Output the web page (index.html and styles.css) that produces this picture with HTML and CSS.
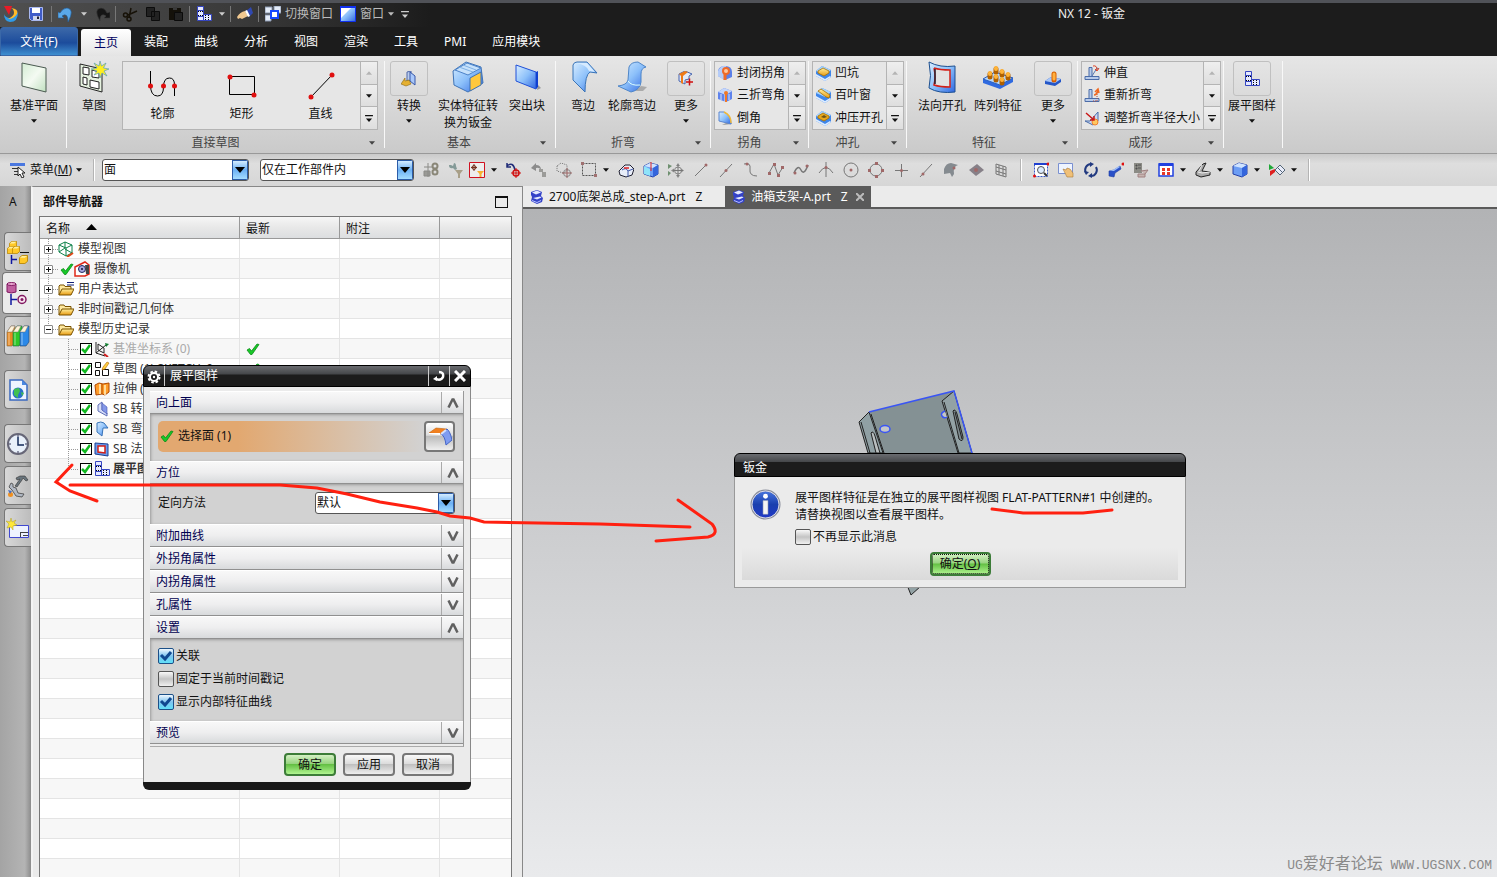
FILE: index.html
```html
<!DOCTYPE html>
<html lang="zh-CN">
<head>
    <meta charset="UTF-8">
    <meta name="viewport" content="width=device-width, initial-scale=1.0">
    <title>NX 12 - 钣金</title>
    <link rel="stylesheet" href="styles.css">
</head>
<body>

    <!-- Shared icons -->
    <svg class="sprite" aria-hidden="true">
        <defs>
            <linearGradient id="blue" x1="0" y1="0" x2="1" y2="1"><stop offset="0" stop-color="#d8edff"/><stop offset=".5" stop-color="#8cc0fa"/><stop offset="1" stop-color="#2f66e0"/></linearGradient>
            <linearGradient id="green" x1="0" y1="0" x2="1" y2="1"><stop offset="0" stop-color="#d3ecd3"/><stop offset=".5" stop-color="#f4faf2"/><stop offset="1" stop-color="#c0e0c0"/></linearGradient>
            <linearGradient id="gold" x1="0" y1="0" x2="0" y2="1"><stop offset="0" stop-color="#fff0a0"/><stop offset="1" stop-color="#e89a10"/></linearGradient>
            <linearGradient id="info" x1="0" y1="0" x2="0" y2="1"><stop offset="0" stop-color="#4a78e0"/><stop offset=".5" stop-color="#1a3fae"/><stop offset="1" stop-color="#2038c8"/></linearGradient>
        </defs>
        <symbol id="caret" viewBox="0 0 7 4"><path d="M0 0h7L3.500 4z" fill="currentColor"/></symbol>
        <symbol id="caret-bar" viewBox="0 0 9 8"><path d="M0 0h9v1.500H0zM1 4h7L4.500 8z" fill="currentColor"/></symbol>
        <symbol id="up" viewBox="0 0 12 10"><path d="m1.500 9.500 4-8h1l4 8" fill="none" stroke="#606060" stroke-width="2.500"/></symbol>
        <symbol id="down" viewBox="0 0 12 10"><path d="m1.500.5 4 8h1l4-8" fill="none" stroke="#606060" stroke-width="2.500"/></symbol>
        <symbol id="tick" viewBox="0 0 14 12"><path d="M1 7 3.500 5.500 5.500 8 11 1l2 .5L6 11.500H4.500z" fill="#18c828" stroke="#0b8a18" stroke-width=".8"/></symbol>
        <symbol id="folder" viewBox="0 0 16 16"><path d="M1 14V5l1-1h4l1 1.500h6V8" fill="#ffe9a0" stroke="#7a5200"/><path d="M1 14 4 8h12l-3 6z" fill="url(#gold)" stroke="#7a5200"/></symbol>
        <symbol id="flat" viewBox="0 0 16 16"><path d="M1.500.5h6v4h-6zM1.500 10.500h6v4h-6zM1.500 4.500h6v6h-6zM7.500 8.500h8v6h-8z" fill="#e4e8ff" stroke="#3545c0"/><path d="M2 5.500h5M2 9.500h5M9.500 9v5M12.500 9v5" stroke="#000" stroke-dasharray="1 1"/></symbol>
        <symbol id="part" viewBox="0 0 16 16"><path d="M2 3 8 1l5 2-1 4 2 2-1 4-5 2-6-3 1-4-1-2z" fill="#3442c8"/><path d="m3 3.500 5-2 4 2-5 2zM4 9l4 1.500 4.500-2L11 7.500z" fill="#e5eaff"/><path d="m3 11.500 5 2 4-2" stroke="#b5c0ff" fill="none"/></symbol>
        <symbol id="die" viewBox="0 0 16 16"><path d="m1 6 6-5 9 4v7l-6 4-9-5z" fill="#3f86ea"/><path d="m1 6 6-5 9 4-6 5z" fill="#a8d4fa"/><path d="m1 11 9 5 6-4-1-1-5 3-9-5z" fill="#dcecff"/></symbol>
        <symbol id="bendbase" viewBox="0 0 16 16"><path d="M1 11.500h14v3H1zM5 2.500h3v9H5z" fill="#b8cbea" stroke="#4b6ca8"/></symbol>
        <symbol id="cube" viewBox="0 0 16 16"><path d="m1 4 6-3 8 2v9l-5 3-9-3z" fill="#6c9df4" stroke="#2440a8"/><path d="m1 4 6-3 8 2-5 3z" fill="#cfe3ff"/><path d="m10 6 5-3v9l-5 3z" fill="#3465dc"/></symbol>
        <symbol id="block" viewBox="0 0 10 10"><path d="m.5 3 3-2.500h6V7l-3 2.500h-6z" fill="#ffc828" stroke="#b88400"/><path d="m1 3 2.500-2H9L6.500 3z" fill="#fff0a0"/></symbol>
    </svg>

    <header class="titlebar">
        <svg class="icon" viewBox="0 0 16 16"><path d="M1 8q0 7 6 8 8 0 8-10-4 6-9 6-4-1-5-4" fill="#2f9be8"/><path d="M8 2q8 1 6 6-3 5-9 5 6-3 6-6 0-4-3-5" fill="#ffba28"/><path d="M1 0h8L6 9z" fill="#e81c28"/></svg>
        <svg class="icon save" viewBox="0 0 16 16"><path d="M1.500 1.500h13v13h-11l-2-2z" fill="#405cc8" stroke="#a9b8f0"/><path d="M4 2h8v5H4z" fill="#fff"/><path d="M5 10h7v4H5z" fill="#cfd5ea"/><path d="M9 10.500h2V13H9z" fill="#223"/></svg>
        <i class="bar"></i>
        <svg class="icon" viewBox="0 0 16 16"><path d="M0 6v6h6l-2-2q6-4 6 6 7-13-1-14-4 0-7 5z" fill="#5aa8e8" stroke="#205c9a" stroke-width=".6"/></svg>
        <svg class="caret light"><use href="#caret"/></svg>
        <svg class="icon" viewBox="0 0 16 16"><path d="M16 6v6h-6l2-2Q6 6 6 15-1 3 7 2q4 0 6 5z" fill="#151515" stroke="#3a3a3a" stroke-width=".6"/></svg>
        <i class="bar"></i>
        <svg class="icon" viewBox="0 0 16 16"><path d="m15 5-9 4m3-7-2 10" stroke="#171208" stroke-width="1.500"/><circle cx="3.500" cy="9" r="2" fill="none" stroke="#171208" stroke-width="1.500"/><circle cx="7" cy="13" r="2" fill="none" stroke="#171208" stroke-width="1.500"/></svg>
        <svg class="icon" viewBox="0 0 16 16"><path d="M1.500 1.500h8v9h-8zM6.500 5.500h8v9h-8z" fill="#222" stroke="#0c0c0c"/></svg>
        <svg class="icon" viewBox="0 0 16 16"><path d="M1 2h12v12H1z" fill="#14110a"/><path d="M5 1h4v3H5z" fill="#3a3a3a"/><path d="M6.500 6.500h8v8h-8z" fill="#222" stroke="#0a0a0a"/></svg>
        <i class="bar"></i>
        <svg class="icon"><use href="#flat"/></svg>
        <svg class="caret light"><use href="#caret"/></svg>
        <i class="bar"></i>
        <svg class="icon" viewBox="0 0 16 16"><path d="M0 11q3-5 8-6l3 5-6 3-2-1-2 1z" fill="#f0c890"/><path d="m9 5 5-4 2 6-4 4z" fill="#3048b0"/><path d="m8 5 2-1 3 6-2 1z" fill="#fff"/></svg>
        <i class="bar"></i>
        <button class="title-button"><svg class="icon" viewBox="0 0 16 16"><path d="M0 1h7v6H0zM9 0h7v7H9zM0 9h6v6H0z" fill="#e4ecf8" stroke="#8a98b0"/><path d="M6 5h7v7H6z" fill="#fff" stroke="#1747ff" stroke-width="2"/></svg>切换窗口</button>
        <button class="title-button"><svg class="icon" viewBox="0 0 16 16"><path d="M.5.5h15v15H.5z" fill="url(#blue)" stroke="#1030f0"/><path d="M0 0h16v2H0z" fill="#1030f0"/><path d="M1 2h10L1 12z" fill="#fff"/></svg>窗口<svg class="caret"><use href="#caret"/></svg></button>
        <svg class="caret-bar light"><use href="#caret-bar"/></svg>
        <h1 class="app-title">NX 12 - 钣金</h1>
    </header>

    <nav class="tabs">
        <button class="tab file">文件(F)</button>
        <button class="tab active">主页</button>
        <button class="tab">装配</button>
        <button class="tab">曲线</button>
        <button class="tab">分析</button>
        <button class="tab">视图</button>
        <button class="tab">渲染</button>
        <button class="tab">工具</button>
        <button class="tab">PMI</button>
        <button class="tab">应用模块</button>
    </nav>

    <!-- Ribbon -->
    <div class="ribbon">
        <div class="group g-datum">
            <div class="group-body">
                <button class="tool"><svg viewBox="0 0 32 32"><path d="M4 2l24 5v24L4 25z" fill="url(#green)" stroke="#4a5a50"/></svg>基准平面<svg class="caret"><use href="#caret"/></svg></button>
            </div>
        </div>
        <div class="group g-sketch">
            <div class="group-body">
                <button class="tool"><svg viewBox="0 0 32 32"><path d="M2 3l22 5v23L2 25z" fill="#e6f2e0" stroke="#222"/><path d="m5 6 6 1v7l-6-1zM14 9l7 2v6l-7-1zM5 16l4 1v7l-4-1zM12 19l9 2v7l-9-2z" fill="#fff" stroke="#222"/><path d="m22 0 1.500 5 4.500-3-2.500 5L31 8l-5 2 3 5-5-3-2 5-1-5-5 2 3-4-6-2 6-1-3-5 5 3z" fill="#ffee20" stroke="#5a9fb8" stroke-width=".7"/></svg>草图</button>
                <div class="gallery">
                    <button class="shape"><svg viewBox="0 0 32 32"><path d="M3.500 1v14q0 11 7 11 6 0 6-9 0-9 6-9 5 0 5 7v11" fill="none" stroke="#000"/><circle cx="3.500" cy="16" r="2.500" fill="#e01010"/><circle cx="16.500" cy="16" r="2.500" fill="#e01010"/><circle cx="27.500" cy="16" r="2.500" fill="#e01010"/></svg>轮廓</button>
                    <button class="shape"><svg viewBox="0 0 32 32"><path d="M3.500 6.500h25v18h-25z" fill="none" stroke="#000"/><circle cx="4" cy="7" r="2.500" fill="#e01010"/><circle cx="28" cy="25" r="2.500" fill="#e01010"/></svg>矩形</button>
                    <button class="shape"><svg viewBox="0 0 32 32"><path d="M6 27 27 5" stroke="#000"/><circle cx="6" cy="27" r="2.500" fill="#e01010"/><circle cx="27" cy="5" r="2.500" fill="#e01010"/></svg>直线</button>
                    <div class="scroller">
                        <button aria-label="上一行" disabled><svg class="caret flip"><use href="#caret"/></svg></button>
                        <button aria-label="下一行"><svg class="caret"><use href="#caret"/></svg></button>
                        <button aria-label="展开"><svg class="caret-bar"><use href="#caret-bar"/></svg></button>
                    </div>
                </div>
            </div>
            <div class="group-foot"><span>直接草图</span><svg class="caret"><use href="#caret"/></svg></div>
        </div>
        <div class="group g-basic">
            <div class="group-body">
                <button class="tool"><span class="frame"><svg viewBox="0 0 16 16"><path d="m6 1 4-1v9l-4 1z" fill="#b9ccec" stroke="#5068a8"/><path d="m9 1 5 4v9l-5-4z" fill="#a9c8fa" stroke="#3757a8"/><path d="m0 13 4-6v3l4-1 2 4-5 2z" fill="#e5b030" stroke="#8a6810" stroke-width=".6"/></svg></span>转换<svg class="caret"><use href="#caret"/></svg></button>
                <button class="tool wide"><svg viewBox="0 0 32 32"><path d="M1 10 14 1l15 5 2 16-15 9-14-7z" fill="url(#blue)" stroke="#3f73b5"/><path d="m3 9 12-7 14 5-13 7z" fill="#c6e1fb" stroke="#4c82c8"/><path d="M7 6l14 5M11 4l13 5" stroke="#7fb0e4"/><path d="M18 17 29 11v13l-11 6z" fill="#ffc83c" stroke="#3f73b5"/></svg>实体特征转<br>换为钣金</button>
                <button class="tool"><svg viewBox="0 0 32 32"><path d="m26 29 4-2-3-3z" fill="#999"/><path d="M5 4 25 11v17L5 20z" fill="url(#blue)" stroke="#1f4fd8"/><path d="m25 11 2-1v16l-2 2z" fill="#1040d0"/></svg>突出块</button>
            </div>
            <div class="group-foot"><span>基本</span><svg class="caret"><use href="#caret"/></svg></div>
        </div>
        <div class="group g-bend">
            <div class="group-body">
                <button class="tool"><svg viewBox="0 0 32 32"><path d="M6 4q1-3 4-3h10l10 11-7-1q-5 3-5 20L6 19z" fill="url(#blue)" stroke="#3974b8"/><path d="M9 2h11l8 9-6-1Q20 4 9 2" fill="#d6ebff"/></svg>弯边</button>
                <button class="tool mid"><svg viewBox="0 0 32 32"><path d="M19 30h8l4-4-6-1z" fill="#aaa"/><path d="M13 6q2-5 9-5l8 5q-5 1-5 7v8q-1 8-10 10L2 25q9-1 10-6z" fill="url(#blue)" stroke="#4f86c8"/><path d="M12 20q3 5 12 4" fill="none" stroke="#dff"/></svg>轮廓弯边</button>
                <button class="tool more"><span class="frame"><svg viewBox="0 0 16 16"><path d="m1 3 6-3 7 3-3 2v3l-4 1v4l-6-3z" fill="#e2ebfa" stroke="#4865b0"/><path d="m1 3 6-3 3 1-5 4v8l-2-1V5z" fill="#ee7a18"/><path d="M8 11h7M11.500 7.500v7" stroke="#d01010" stroke-width="1.500"/></svg></span>更多<svg class="caret"><use href="#caret"/></svg></button>
            </div>
            <div class="group-foot"><span>折弯</span><svg class="caret"><use href="#caret"/></svg></div>
        </div>
        <div class="group g-corner">
            <div class="group-body">
                <div class="gallery list">
                    <div class="rows">
                        <button><svg class="icon" viewBox="0 0 16 16"><path d="M1 6q1-5 7-5 7 0 7 6v5l-7 3-7-4z" fill="#5a7fe8"/><path d="M1 6q3-6 8-5l-2 14-6-4z" fill="#b5ccf8"/><path d="M8 8v7" stroke="#ef6a28" stroke-width="3"/><circle cx="9" cy="6" r="3" fill="#ffc9a0" stroke="#ef6a28" stroke-width="2"/></svg>封闭拐角</button>
                        <button><svg class="icon" viewBox="0 0 16 16"><path d="m1 5 6-4 8 3v8l-6 3-8-3z" fill="#5f83ec"/><path d="m1 5 6-4 8 3-6 4z" fill="#c4d6fa"/><path d="M8 7v8M4 7v6M12 7v6" stroke="#dce6ff"/><circle cx="9" cy="6" r="2" fill="#f07828"/><path d="M9 7v8" stroke="#f07828" stroke-width="2"/></svg>三折弯角</button>
                        <button><svg class="icon" viewBox="0 0 16 16"><path d="m5 15 10-1-2-3z" fill="#999"/><path d="m2 2 5 0q7 3 7 12L2 11z" fill="url(#blue)" stroke="#5a85d0"/><path d="M7 2q7 3 7 11" fill="none" stroke="#f0b838" stroke-width="1.500"/></svg>倒角</button>
                    </div>
                    <div class="scroller">
                        <button aria-label="上一行" disabled><svg class="caret flip"><use href="#caret"/></svg></button>
                        <button aria-label="下一行"><svg class="caret"><use href="#caret"/></svg></button>
                        <button aria-label="展开"><svg class="caret-bar"><use href="#caret-bar"/></svg></button>
                    </div>
                </div>
            </div>
            <div class="group-foot"><span>拐角</span><svg class="caret"><use href="#caret"/></svg></div>
        </div>
        <div class="group g-punch">
            <div class="group-body">
                <div class="gallery list">
                    <div class="rows">
                        <button><svg class="icon" viewBox="0 0 16 16"><use href="#die"/><path d="m3 6 5-3 6 3v2l-5 3-6-3z" fill="url(#gold)" stroke="#a87000" stroke-width=".8"/></svg>凹坑</button>
                        <button><svg class="icon" viewBox="0 0 16 16"><use href="#die"/><path d="m3 4 3-2 9 6-1 3-3-1z" fill="url(#gold)" stroke="#a87000" stroke-width=".8"/></svg>百叶窗</button>
                        <button><svg class="icon" viewBox="0 0 16 16"><use href="#die"/><path d="m3 6 5-3 6 3v2l-5 3-6-3z" fill="#e8a81c" stroke="#a87000" stroke-width=".8"/><path d="m6 7 3-2 3 2-3 1z" fill="#6c5418"/></svg>冲压开孔</button>
                    </div>
                    <div class="scroller">
                        <button aria-label="上一行" disabled><svg class="caret flip"><use href="#caret"/></svg></button>
                        <button aria-label="下一行"><svg class="caret"><use href="#caret"/></svg></button>
                        <button aria-label="展开"><svg class="caret-bar"><use href="#caret-bar"/></svg></button>
                    </div>
                </div>
            </div>
            <div class="group-foot"><span>冲孔</span><svg class="caret"><use href="#caret"/></svg></div>
        </div>
        <div class="group g-feature">
            <div class="group-body">
                <button class="tool"><svg viewBox="0 0 32 32"><path d="M3 1q11 6 26 4v26q-16 2-26-4 3-12 0-26" fill="url(#blue)" stroke="#1c4f90"/><path d="M8 7q6 2 16 2v17q-10 0-16-2 2-8 0-17" fill="#e2e2e2" stroke="#d22018" stroke-width="1.500"/><path d="M9 8v15" stroke="#223" stroke-width="1.500"/></svg>法向开孔</button>
                <button class="tool"><svg viewBox="0 0 32 32"><path d="m1 18 12-7 18 6v4l-13 7L1 22z" fill="#2f6ae0"/><path d="m1 18 12-7 18 6-13 7z" fill="#b9d8fa" stroke="#2a60c0"/><path d="M8 13v3M14 8v3M14 16v3M20 11v3M20 19v3M26 14v3" stroke="#b06000" stroke-width="5" stroke-linecap="round"/><path d="M8 12v1M14 7v1M14 15v1M20 10v1M20 18v1M26 13v1" stroke="#ffb338" stroke-width="4" stroke-linecap="round"/></svg>阵列特征</button>
                <button class="tool more"><span class="frame"><svg viewBox="0 0 16 16"><path d="m0 10 6-4 10 2v3l-6 4-10-2z" fill="#2456c8"/><path d="m0 10 6-4 10 2-6 4z" fill="#a9c8f8"/><path d="M9 3v6" stroke="#d86000" stroke-width="5" stroke-linecap="round"/><path d="M9 3v5" stroke="#ffb040" stroke-width="3" stroke-linecap="round"/></svg></span>更多<svg class="caret"><use href="#caret"/></svg></button>
            </div>
            <div class="group-foot"><span>特征</span><svg class="caret"><use href="#caret"/></svg></div>
        </div>
        <div class="group g-form">
            <div class="group-body">
                <div class="gallery list">
                    <div class="rows">
                        <button><svg class="icon" viewBox="0 0 16 16"><use href="#bendbase"/><path d="m8 11 5-8 2 1" fill="none" stroke="#5878b0"/><path d="M9 1q4-1 4 4m2-2-2 3-2-2" fill="none" stroke="#e04020"/></svg>伸直</button>
                        <button><svg class="icon" viewBox="0 0 16 16"><use href="#bendbase"/><path d="M9 14h4V5" fill="none" stroke="#b05040" stroke-dasharray="1 1"/><path d="m10 8q3 0 4-5m-3 2 3-3 1 4" fill="none" stroke="#f06820" stroke-width="1.500"/></svg>重新折弯</button>
                        <button><svg class="icon" viewBox="0 0 16 16"><path d="M1 11h5L14 2v9l-5 4z" fill="#c8d8f4" stroke="#4b6ca8"/><circle cx="11" cy="12" r="3" fill="#ffc860" stroke="#f08030"/><path d="m2 3 8 7m0-4v4H6" fill="none" stroke="#c81818" stroke-width="1.500"/></svg>调整折弯半径大小</button>
                    </div>
                    <div class="scroller">
                        <button aria-label="上一行" disabled><svg class="caret flip"><use href="#caret"/></svg></button>
                        <button aria-label="下一行"><svg class="caret"><use href="#caret"/></svg></button>
                        <button aria-label="展开"><svg class="caret-bar"><use href="#caret-bar"/></svg></button>
                    </div>
                </div>
            </div>
            <div class="group-foot"><span>成形</span><svg class="caret"><use href="#caret"/></svg></div>
        </div>
        <div class="group g-flat">
            <div class="group-body">
                <button class="tool"><span class="frame"><svg><use href="#flat"/></svg></span>展平图样<svg class="caret"><use href="#caret"/></svg></button>
            </div>
        </div>
    </div>

    <!-- Selection bar -->
    <div class="selection-bar">
        <button class="menu-button"><svg class="icon" viewBox="0 0 16 16"><path d="M0 1h15v3H0z" fill="#4a78e0"/><path d="M2 6.500h7M4 9.500h5M4 12.500h5" stroke="#333"/><path d="M8 5v9l2-2 2 4 2-1-2-4h3z" fill="#fff" stroke="#222"/></svg>菜单(<u>M</u>)<svg class="caret"><use href="#caret"/></svg></button>
        <i class="divider"></i>
        <span class="combo c-type"><select aria-label="类型过滤器"><option>面</option></select><span class="combo-arrow"><svg viewBox="0 0 10 6"><path d="M0 0h10L5 6z"/></svg></span></span>
        <span class="combo c-scope"><select aria-label="选择范围"><option>仅在工作部件内</option></select><span class="combo-arrow"><svg viewBox="0 0 10 6"><path d="M0 0h10L5 6z"/></svg></span></span>
        <div class="snap">
            <svg class="icon" viewBox="0 0 16 16"><path d="M5 1v14M1 5h8M1 9h6v5H1z" stroke="#8a8a86" fill="#9a9a96"/><circle cx="12" cy="4" r="2.500" fill="none" stroke="#8a8778" stroke-width="2"/><circle cx="12" cy="10" r="2.500" fill="none" stroke="#8a8778" stroke-width="2"/></svg>
            <svg class="icon near" viewBox="0 0 16 16"><path d="M1 3q0 4 4 3l2 2 2-1-1-3q0-3-2-3l-1 3-2-1z" fill="#849a98"/><path d="M7 8h8l-3 4v4h-2v-4z" fill="#a89f88"/></svg>
            <svg class="icon" viewBox="0 0 16 16"><path d="M.5.5h15v15H.5z" fill="#eee" stroke="#d01020"/><path d="M5 2v7M2 5.500h6" stroke="#732"/><circle cx="5" cy="5.500" r="2" fill="none" stroke="#732"/><path d="M8 9h7l-2.500 3v3h-2v-3z" fill="#f8b030"/></svg>
            <svg class="caret"><use href="#caret"/></svg>
            <svg class="icon" viewBox="0 0 16 16"><path d="M1 4q6-5 8 4M1 1v4h4" fill="none" stroke="#202c78" stroke-width="1.500"/><path d="M10 6v10M5 11h10" stroke="#d01010"/><circle cx="10" cy="11" r="3" fill="none" stroke="#d01010" stroke-width="1.500"/></svg>
            <svg class="icon" viewBox="0 0 16 16"><path d="M0 6 5 1v2q5 0 5 5-2-3-5-2v3z" fill="#8c8c8c"/><path d="M8 7h4v3H8zM11 10h4v5h-4z" fill="#9b9b98"/></svg>
            <svg class="icon" viewBox="0 0 16 16"><path d="m1 4 4-3 6 2v6l-4 2-6-2z" fill="none" stroke="#777" stroke-dasharray="1 1"/><circle cx="11" cy="11" r="3.500" fill="none" stroke="#888"/><path d="M11 6v10M6 11h10" stroke="#9a6464"/></svg>
            <svg class="icon" viewBox="0 0 16 16"><path d="M1.500 1.500h13v12h-13z" fill="none" stroke="#555" stroke-dasharray="2 1"/><path d="M0 0h3v3H0zM13 12h3v3h-3z" fill="#a07070"/></svg>
            <svg class="caret"><use href="#caret"/></svg>
            <svg class="icon" viewBox="0 0 16 16"><path d="m1 9 6-6 5 0 4 4-2 6-6 2-6-2z" fill="#e8edf8" stroke="#223"/><path d="M4 8q4-3 6 1v6M10 9l5-2" fill="none" stroke="#4058a8"/><path d="m6 6 5 0" stroke="#e02020" stroke-width="1.500"/></svg>
            <svg class="icon" viewBox="0 0 16 16"><use href="#cube"/><path d="M8 0v9" stroke="#e02020"/><path d="M1 4v8l6 2V7z" fill="#8ee4fa"/></svg>
            <svg class="icon" viewBox="0 0 16 16"><path d="M0 2v5l4-3zM0 9v5l3-3z" fill="#6f9070"/><path d="m10 1 2 3H8zm0 15 2-3H8zM3 8.500l3-2v4zm13 0-3-2v4z" fill="#888"/><circle cx="10" cy="8.500" r="3.500" fill="none" stroke="#888"/><path d="M10 3v11M5 8.500h10" stroke="#777"/></svg>
            <svg class="icon" viewBox="0 0 16 16"><path d="M2 14 13 3" stroke="#777"/><circle cx="13" cy="3" r="1.500" fill="#a06868"/></svg>
            <svg class="icon" viewBox="0 0 16 16"><path d="M2 15 14 2" stroke="#777"/><circle cx="8" cy="8.500" r="1.500" fill="#a06868"/></svg>
            <svg class="icon" viewBox="0 0 16 16"><path d="M1 2q7-2 6 5t7 7" fill="none" stroke="#777"/><circle cx="4" cy="2" r="1.500" fill="#a06868"/></svg>
            <svg class="icon" viewBox="0 0 16 16"><path d="m1 11 5-9 4 11 5-8" fill="none" stroke="#777"/><path d="M0 10h3v3H0zM5 1h3v3H5zM9 12h3v3H9zM13 4h3v3h-3z" fill="#a06868"/></svg>
            <svg class="icon" viewBox="0 0 16 16"><path d="M1 11q4-9 7-3t7-5" fill="none" stroke="#777" stroke-width="1.500"/><circle cx="2" cy="11" r="1.500" fill="#a06868"/><circle cx="14" cy="4" r="1.500" fill="#a06868"/></svg>
            <svg class="icon" viewBox="0 0 16 16"><path d="M1 11q7-11 14 0M8 0v15" fill="none" stroke="#777"/><circle cx="8" cy="5.500" r="1.500" fill="#a06868"/></svg>
            <svg class="icon" viewBox="0 0 16 16"><circle cx="8" cy="8" r="7" fill="none" stroke="#777"/><circle cx="8" cy="8" r="1.500" fill="#a06868"/></svg>
            <svg class="icon" viewBox="0 0 16 16"><circle cx="8" cy="8" r="6" fill="none" stroke="#777"/><path d="M7 0h3v3H7zM7 13h3v3H7zM0 7h3v3H0zM13 7h3v3h-3z" fill="#a06868"/></svg>
            <svg class="icon" viewBox="0 0 16 16"><path d="M8.500 2v13M2 8.500h13" stroke="#777"/><circle cx="8.500" cy="8.500" r="1.500" fill="#a06868"/></svg>
            <svg class="icon" viewBox="0 0 16 16"><path d="M2 15 14 2" stroke="#777"/><circle cx="5" cy="12" r="1.500" fill="#a06868"/></svg>
            <svg class="icon" viewBox="0 0 16 16"><path d="M1 7q2-6 7-6l7 2-2 1q-3 2-2 8l-2 3-2-4-6 1z" fill="#858b90"/><circle cx="11" cy="6" r="1.500" fill="#a06868"/></svg>
            <svg class="icon" viewBox="0 0 16 16"><path d="M1 8 9 2l7 6-8 6z" fill="#868088"/><circle cx="8" cy="8" r="2" fill="#a06868"/></svg>
            <svg class="icon" viewBox="0 0 16 16"><path d="m3 2 10 3v10L3 12zM6 3v10m4-9v10M3 5l10 3M3 9l10 3" fill="none" stroke="#777"/></svg>
        </div>
        <i class="divider wide"></i>
        <div class="view-tools">
            <svg class="icon" viewBox="0 0 16 16"><path d="M1.500 2.500h13v12h-13z" fill="#fff" stroke="#3556c8" stroke-dasharray="2 1"/><path d="M1 1h14v2H1z" fill="#2040d0"/><circle cx="8" cy="8" r="3.500" fill="#dcebff" stroke="#555"/><path d="m11 11 3 3" stroke="#333" stroke-width="2"/><circle cx="15" cy="2" r="1.500" fill="#e01010"/><circle cx="1.500" cy="14" r="1.500" fill="#e01010"/></svg>
            <svg class="icon" viewBox="0 0 16 16"><path d="M.5 1.500h14v10H.5z" fill="#eef4ff" stroke="#7a90d0"/><path d="m5 7 3 1 1-2 3 1 3 4v4H9z" fill="#f0c078" stroke="#a87838" stroke-width=".6"/></svg>
            <svg class="icon" viewBox="0 0 16 16"><path d="M3 11A6 6 0 0 1 8 2M13 5a6 6 0 0 1-5 9" fill="none" stroke="#223a80" stroke-width="2"/><path d="m7 0 4 2-4 3zM9 11l-4 3 4 2zM1 9l2 4 3-3z" fill="#223a80"/></svg>
            <svg class="icon" viewBox="0 0 16 16"><path d="m1 9 5-1 6-4 1 3-6 4-1 4-5-1z" fill="#2a50c8" stroke="#1d3ca0" stroke-width=".6"/><path d="m1 9 4-1 6-4 1 1-6 4z" fill="#9dbdf8"/><circle cx="15" cy="2" r="1.500" fill="#e01010"/></svg>
            <svg class="icon" viewBox="0 0 16 16"><path d="M1 1h8v10H1z" fill="#8b8b85"/><path d="M3 3h1v1H3zM3 6h1v1H3zM5 3h3M5 6h3" stroke="#555"/><path d="M5 12h7v3H5zM8 9l7-1-3 4" fill="#c6b4b0" stroke="#a08080"/></svg>
            <svg class="icon" viewBox="0 0 16 16"><path d="M1 2h14v12H1z" fill="#fff" stroke="#2040e0" stroke-width="1.500"/><path d="M1 1h14v3H1z" fill="#2040e0"/><path d="M4 6h3v3H4zM9 6h3v3H9zM4 10h3v3H4zM9 10h3v3H9z" fill="#e83828"/></svg>
            <svg class="caret"><use href="#caret"/></svg>
            <svg class="icon" viewBox="0 0 16 16"><path d="m1 10 7-8 3-1-4 8 8 1v3l-9 2-5-2z" fill="#aaa" stroke="#222"/><path d="m3 10 4 1 8-1M7 3 4 9" fill="none" stroke="#eee"/></svg>
            <svg class="caret"><use href="#caret"/></svg>
            <svg class="icon"><use href="#cube"/></svg>
            <svg class="caret"><use href="#caret"/></svg>
            <svg class="icon" viewBox="0 0 16 16"><path d="M0 2v6l5-2z" fill="#20a838"/><path d="m1 14 0-5 5-2v3z" fill="#e02020"/><path d="m6 8 5-5 5 5-5 5z" fill="#e8ecfa" stroke="#567"/><path d="m8 5 6 6" stroke="#567"/></svg>
            <svg class="caret"><use href="#caret"/></svg>
        </div>
        <i class="divider"></i>
    </div>

    <main class="workspace">
        <aside class="rail">
            <span class="rail-letter">A</span>
            <button aria-label="装配导航器"><svg viewBox="0 0 24 24"><use href="#block" x="3" y="1" width="8" height="8"/><use href="#block" x="1" y="6" width="8" height="8"/><use href="#block" x="6" y="6" width="8" height="8"/><use href="#block" x="13" y="15" width="9" height="9"/><path d="M14 12.500h9" stroke="#111"/><path d="M5.500 15v9M5 19.500h6" stroke="#1018a0" fill="none" stroke-width="1.500"/></svg></button>
            <button class="current" aria-label="部件导航器"><svg viewBox="0 0 24 24"><path d="M2 3v8q4 2 9 0V3z" fill="#c060a0" stroke="#801860"/><ellipse cx="6.500" cy="3" rx="4.500" ry="1.500" fill="#e8a8d0" stroke="#801860"/><path d="M14 9.500h9" stroke="#111"/><path d="M6 13v11M6 18.500h6" stroke="#1018a0" fill="none" stroke-width="1.500"/><circle cx="17" cy="18.500" r="4" fill="#f8e4f0" stroke="#801860" stroke-width="1.500"/><circle cx="17" cy="18.500" r="1.500" fill="#801860"/></svg></button>
            <button aria-label="重用库"><svg viewBox="0 0 24 24"><path d="m1 8 4-6h4v16l-3 4H1z" fill="#e88a20" stroke="#864" stroke-width=".6"/><path d="m7 8 4-6h5v16l-3 4H7z" fill="#2fc828" stroke="#264" stroke-width=".6"/><path d="m14 8 4-6h5v16l-3 4h-6z" fill="#2a88e8" stroke="#246" stroke-width=".6"/><path d="m1 8 4-6h4L6 8zm6 0 4-6h4l-3 6zm7 0 4-6h4l-3 6z" fill="#fff2d8" stroke="#777" stroke-width=".5"/><path d="M3 9v12M9 9v12M16 9v12" stroke="#fff" stroke-opacity=".5"/></svg></button>
            <button class="space" aria-label="Web 浏览器"><svg viewBox="0 0 24 24"><path d="M4 2h12l5 5v15H4z" fill="#eef4ff" stroke="#3a68c0" stroke-width="1.500"/><path d="M16 2v5h5z" fill="#4a88e0"/><circle cx="12" cy="15" r="5.500" fill="#2870c8"/><path d="m8 11 5-1 1 3-2 4 0 3-4-3zM15 14l3 1-2 3z" fill="#40c050"/></svg></button>
            <button class="space" aria-label="历史记录"><svg viewBox="0 0 24 24"><circle cx="12" cy="12" r="10" fill="#e8f0fa" stroke="#667" stroke-width="2"/><path d="M12 3v2M12 19v2M3 12h2M19 12h2" stroke="#335"/><path d="M12 5v8h6" fill="none" stroke="#102858" stroke-width="1.500"/></svg></button>
            <button aria-label="加工向导"><svg viewBox="0 0 24 24"><path d="m10 4 4-2h5l3 4-2 1-3-3-1 2-5 7-2-1 5-7-3 1z" fill="#68747c" stroke="#333" stroke-width=".6"/><path d="m5 9 2 1 0 3 3 1 2 5 6 1-2 3-6-1-4-6-3-3z" fill="#b0b8c4" stroke="#444" stroke-width=".8"/><circle cx="4.500" cy="20.500" r="2.500" fill="#f09020"/><path d="m2 16 4 1-2 3z" fill="#4a70c0"/></svg></button>
            <button aria-label="角色"><svg viewBox="0 0 24 24"><path d="M3.500 9.500h19v12h-19z" fill="#eef3ff" stroke="#4048d0"/><path d="M14 16.500h8M14.500 17v4M17 19.500h5" stroke="#444"/><path d="m5 2 1 4 4-2-2 3 3 2-4 1 0 4-2-3-4 1 2-4-3-3 4 1z" fill="#ffe838" stroke="#b0a020" stroke-width=".5"/></svg></button>
        </aside>

        <section class="navigator">
            <div class="navigator-title"><h2>部件导航器</h2><button class="restore" aria-label="还原"></button></div>
            <div class="tree">
                <table>
                    <thead>
                        <tr><th>名称<svg class="sort" viewBox="0 0 11 6"><path d="M0 6h11L5.500 0z"/></svg></th><th>最新</th><th>附注</th><th></th></tr>
                    </thead>
                    <tbody>
                        <tr><td><div class="node"><button class="expander plus" aria-label="展开"></button><i class="dots"></i><svg class="icon" viewBox="0 0 16 16"><path d="m1 4 6-3 7 3v8l-6 3-7-4zM1 4l7 3 6-3M8 7v8M7 1v6l-6 4M7 8l7 4" fill="none" stroke="#0b8048"/><path d="m9 16 6-4" stroke="#e04818" stroke-width="2"/></svg>模型视图</div></td><td></td><td></td><td></td></tr>
                        <tr><td><div class="node"><button class="expander plus" aria-label="展开"></button><i class="dots"></i><svg class="tick"><use href="#tick"/></svg><svg class="icon" viewBox="0 0 16 16"><path d="m1 6 10-5 4 3v9l-4 2H1z" fill="#fff" stroke="#e02818" stroke-width="1.500"/><circle cx="8" cy="8" r="3.500" fill="#a9a8e0" stroke="#202860"/><path d="M11 4h4v9h-3z" fill="#444"/><circle cx="8" cy="8" r="1" fill="#113"/></svg>摄像机</div></td><td></td><td></td><td></td></tr>
                        <tr><td><div class="node"><button class="expander plus" aria-label="展开"></button><i class="dots"></i><svg class="icon" viewBox="0 0 16 16"><use href="#folder"/><path d="M9 1.500h7M9 4h7" stroke="#112078"/></svg>用户表达式</div></td><td></td><td></td><td></td></tr>
                        <tr><td><div class="node"><button class="expander plus" aria-label="展开"></button><i class="dots"></i><svg class="icon"><use href="#folder"/></svg>非时间戳记几何体</div></td><td></td><td></td><td></td></tr>
                        <tr><td><div class="node last"><button class="expander" aria-label="折叠"></button><i class="dots"></i><svg class="icon"><use href="#folder"/></svg>模型历史记录</div></td><td></td><td></td><td></td></tr>
                        <tr><td><label class="node child muted"><i class="dots"></i><input type="checkbox" checked><svg class="icon" viewBox="0 0 16 16"><path d="M2 1v11l9 3M2 12 12 4M4 3v6l6 3V7z" fill="none" stroke="#222"/><path d="m11 2 4 1-3 3z" fill="#108030"/><path d="m10 13 4 3" stroke="#d02020" stroke-width="2"/></svg>基准坐标系 (0)</label></td><td><svg class="tick"><use href="#tick"/></svg></td><td></td><td></td></tr>
                        <tr><td><label class="node child"><i class="dots"></i><input type="checkbox" checked><svg class="icon" viewBox="0 0 16 16"><path d="M1.500 1.500h5v5h-5zM1.500 9.500h4v5h-4zM8.500 8.500h6v6h-6z" fill="#fff" stroke="#111"/><path d="m8 9 1-3 4-5 2 1-4 6z" fill="#ffd040" stroke="#b06000" stroke-width=".6"/></svg>草图 (1) SKETCH_0</label></td><td><svg class="tick"><use href="#tick"/></svg></td><td></td><td></td></tr>
                        <tr><td><label class="node child"><i class="dots"></i><input type="checkbox" checked><svg class="icon" viewBox="0 0 16 16"><path d="m1 4 4-2 4 1 6-1v9l-4 3-3-1-6 1z" fill="#ff9c28" stroke="#b04800"/><path d="M6 3v10M11 4v10" stroke="#fff0c0" stroke-width="1.500"/><path d="M8 3v10" stroke="#b04800"/></svg>拉伸 (2)</label></td><td></td><td></td><td></td></tr>
                        <tr><td><label class="node child"><i class="dots"></i><input type="checkbox" checked><svg class="icon" viewBox="0 0 16 16"><path d="m4 4 4-3v8l5 3v3l-9-5z" fill="#d4dcf8" stroke="#6070b8"/><path d="m8 2 5 4v7l-5-4z" fill="#8498e8" stroke="#4858b0" stroke-width=".6"/></svg>SB 转换</label></td><td></td><td></td><td></td></tr>
                        <tr><td><label class="node child"><i class="dots"></i><input type="checkbox" checked><svg class="icon" viewBox="0 0 16 16"><path d="M3 2q4-2 7 0l4 5H9l-1 8-5-4z" fill="url(#blue)" stroke="#3974b8"/></svg>SB 弯边</label></td><td></td><td></td><td></td></tr>
                        <tr><td><label class="node child"><i class="dots"></i><input type="checkbox" checked><svg class="icon" viewBox="0 0 16 16"><path d="m1 2 13 1v12L1 13z" fill="#6a9cf0" stroke="#1c3f90"/><path d="m4 5 7 0v7l-7-1z" fill="#fff" stroke="#d22018" stroke-width="1.500"/></svg>SB 法向</label></td><td></td><td></td><td></td></tr>
                        <tr><td><label class="node child last current"><i class="dots"></i><input type="checkbox" checked><svg class="icon"><use href="#flat"/></svg>展平图样</label></td><td></td><td></td><td></td></tr>
                    </tbody>
                </table>
            </div>
        </section>

        <section class="stage">
            <div class="doc-tabs">
                <button class="doc-tab"><svg class="icon"><use href="#part"/></svg>2700底架总成_step-A.prt<span>Z</span></button>
                <button class="doc-tab open"><svg class="icon"><use href="#part"/></svg>油箱支架-A.prt<span>Z</span><svg class="close" viewBox="0 0 8 8"><path d="m0 0 8 8M8 0 0 8" stroke="#bbb" stroke-width="2"/></svg></button>
            </div>
            <div class="canvas">
                <svg class="model" viewBox="850 385 130 215">
                    <path d="M869 412 954 391 972 453 883 453z" fill="#849194"/>
                    <path d="m859 422 10-10 14 41h-15z" fill="#90a0a4" stroke="#222"/>
                    <path d="m861 422 9 31M871 414l13 39" stroke="#222"/>
                    <path d="m942 401 12-10 18 62h-14z" fill="#93a2a5" stroke="#222"/>
                    <path d="m944 402 15 51" stroke="#222"/>
                    <path d="M871 433q2-3 4 3l5 17h-4z" fill="#b9bfc0" stroke="#222"/>
                    <path d="M953 411q2-3 4 3l6 23q0 6-4 2z" fill="#7e8b8e" stroke="#222"/>
                    <path d="m955 412 7 27" stroke="#222"/>
                    <path d="m869 412 85-21 18 62" fill="none" stroke="#3a55f4" stroke-width="1.500"/>
                    <ellipse cx="885" cy="429" rx="5" ry="3.500" fill="#c4c6c8" stroke="#3a55f4" stroke-width="1.500"/>
                    <path d="M945 411q-5 2-3 5t5 1" fill="#c4c6c8" stroke="#3a55f4" stroke-width="1.500"/>
                    <path d="m905 580 6 15 10-9z" fill="#93a2a5" stroke="#222"/>
                </svg>
                <p class="watermark"><span>UG</span>爱好者论坛<span> WWW.UGSNX.COM</span></p>
            </div>
        </section>
    </main>

    <!-- Flat pattern dialog -->
    <form class="dialog">
        <div class="dialog-title">
            <svg class="gear" viewBox="0 0 14 14"><circle cx="7" cy="7" r="5.500" fill="none" stroke="#fff" stroke-width="2" stroke-dasharray="2.500 1.820"/><circle cx="7" cy="7" r="4" fill="none" stroke="#fff" stroke-width="2"/><circle cx="7" cy="7" r="1.200" fill="#fff"/></svg>
            <h2>展平图样</h2>
            <button type="button" aria-label="重置"><svg viewBox="0 0 12 12"><path d="M6 2q5 0 4 5-2 4-7 2" fill="none" stroke="#fff" stroke-width="2.500"/><path d="m0 9 4-3v5z" fill="#fff"/></svg></button>
            <button type="button" aria-label="关闭"><svg viewBox="0 0 12 12"><path d="m1 1 10 10M11 1 1 11" stroke="#fff" stroke-width="3"/></svg></button>
        </div>
        <div class="dialog-body">
            <div class="sections">
                <button type="button" class="section-head">向上面<span><svg><use href="#up"/></svg></span></button>
                <div class="section-body face">
                    <div class="pick"><svg class="tick"><use href="#tick"/></svg>选择面 (1)</div>
                    <button type="button" class="face-button" aria-label="面"><svg viewBox="0 0 24 20"><path d="m1 7 7-5 11 1-6 5z" fill="#f08020" stroke="#b85800" stroke-width=".5"/><path d="M1 7h11v2L1 8z" fill="#fff"/><path d="m13 8 6-5q3 2 5 11l-6 5q-1-9-5-11" fill="#7f9cf0" stroke="#4565c8"/><path d="m13 8 5-4" stroke="#d5e2ff" stroke-width="2"/></svg></button>
                </div>
                <button type="button" class="section-head">方位<span><svg><use href="#up"/></svg></span></button>
                <div class="section-body orient">
                    <label for="orient">定向方法</label>
                    <span class="combo"><select id="orient"><option>默认</option></select><span class="combo-arrow"><svg viewBox="0 0 10 6"><path d="M0 0h10L5 6z"/></svg></span></span>
                </div>
                <button type="button" class="section-head">附加曲线<span><svg><use href="#down"/></svg></span></button>
                <button type="button" class="section-head">外拐角属性<span><svg><use href="#down"/></svg></span></button>
                <button type="button" class="section-head">内拐角属性<span><svg><use href="#down"/></svg></span></button>
                <button type="button" class="section-head">孔属性<span><svg><use href="#down"/></svg></span></button>
                <button type="button" class="section-head">设置<span><svg><use href="#up"/></svg></span></button>
                <div class="section-body settings">
                    <label class="check"><input type="checkbox" checked>关联</label>
                    <label class="check"><input type="checkbox">固定于当前时间戳记</label>
                    <label class="check"><input type="checkbox" checked>显示内部特征曲线</label>
                </div>
                <button type="button" class="section-head">预览<span><svg><use href="#down"/></svg></span></button>
            </div>
            <div class="actions">
                <button type="button" class="push primary">确定</button>
                <button type="button" class="push">应用</button>
                <button type="button" class="push">取消</button>
            </div>
        </div>
    </form>

    <!-- Message box -->
    <div class="message" role="alertdialog" aria-labelledby="message-title">
        <h2 id="message-title">钣金</h2>
        <div class="message-body">
            <div class="message-main">
                <svg class="info" viewBox="0 0 32 32"><circle cx="16" cy="16" r="14.500" fill="url(#info)" stroke="#8b8f9c" stroke-width="2"/><circle cx="16" cy="16" r="14" fill="none" stroke="#eef" stroke-width=".8"/><circle cx="16" cy="7.500" r="2.500" fill="#fff"/><path d="M13.500 12h5v14h-5z" fill="#f4f4f4" stroke="#b8b8b8" stroke-width=".5"/></svg>
                <div>
                    <p>展平图样特征是在独立的展平图样视图 FLAT-PATTERN#1 中创建的。<br>请替换视图以查看展平图样。</p>
                    <label class="check"><input type="checkbox">不再显示此消息</label>
                </div>
            </div>
            <div class="message-foot"><button class="push primary focused">确定(<u>O</u>)</button></div>
        </div>
    </div>

    <!-- Hand-drawn markup -->
    <svg class="markup" aria-hidden="true">
        <path d="M72 465 56 482 70 491 97 501"/>
        <path d="M70 485H280L317 488 347 494 380 502 417 508 437 512 450 516 470 518 484 522 600 524 690 527"/>
        <path d="M678 500 712 524Q720 534 708 537L656 541"/>
        <path d="M992 509 1023 513H1083L1112 510"/>
    </svg>

</body>
</html>
```
FILE: styles.css
```css
/* Base */
* {
    box-sizing: border-box;
}
body {
    margin: 0;
    height: 100vh;
    display: flex;
    flex-direction: column;
    overflow: hidden;
    font: 12px/16px "Noto Sans", "Noto Sans CJK SC", sans-serif;
    color: #111;
    background: #dcdcdc;
}
h1, h2, p {
    margin: 0;
    font-size: 12px;
    font-weight: 400;
}
button, select, input {
    font: inherit;
    color: inherit;
    margin: 0;
}
button {
    padding: 0;
    border: 0;
    background: none;
    white-space: nowrap;
}
svg {
    flex: none;
    display: block;
}
.sprite {
    width: 0;
    height: 0;
    position: absolute;
}
.icon {
    width: 16px;
    height: 16px;
}
.caret {
    width: 6px;
    height: 4px;
}
.caret-bar {
    width: 8px;
    height: 7px;
}
.flip {
    transform: rotate(180deg);
}
.light {
    color: #ccc;
}
.tick {
    width: 14px;
    height: 12px;
}

/* Title bar */
.titlebar {
    height: 27px;
    flex: none;
    display: flex;
    align-items: center;
    gap: 7px;
    padding: 0 4px 2px 3px;
    border-top: 3px solid #505258;
    background: linear-gradient(90deg, #505050 0, #3a3a3a 240px, #1c1c1c 430px);
}
.titlebar .save {
    margin: 0 2px;
}
.bar {
    width: 1px;
    height: 16px;
    margin: 0 -1px 0 -2px;
    background: #777;
}
.title-button {
    display: flex;
    align-items: center;
    gap: 4px;
    color: #bbb;
}
.app-title {
    margin-left: auto;
    margin-right: 368px;
    color: #eee;
}

/* Ribbon tabs */
.tabs {
    height: 29px;
    flex: none;
    display: flex;
    background: #1c1c1c;
}
.tab {
    padding: 0 13px;
    color: #fff;
}
.tab.file {
    width: 78px;
    padding: 0;
    margin-right: 3px;
    border-radius: 3px 3px 0 0;
    border: 1px solid #3a68a8;
    background: linear-gradient(#3c68a8, #1c4c9c 55%, #3f8fd0);
}
.tab.active {
    margin-top: 2px;
    color: #000060;
    border-radius: 3px 3px 0 0;
    background: linear-gradient(#fff, #e4e4e4);
}

/* Ribbon */
.ribbon {
    height: 98px;
    flex: none;
    display: flex;
    background: linear-gradient(#e6e6e6, #cacaca);
    border-bottom: 1px solid #999;
}
.group {
    display: flex;
    flex-direction: column;
    margin: 5px 0;
    border-right: 1px solid #f8f8f8;
}
.group-body {
    display: flex;
    flex: none;
    height: 72px;
}
.g-datum { width: 67px; padding-left: 6px; }
.g-sketch { width: 318px; padding-left: 3px; }
.g-basic { width: 171px; padding-left: 1px; }
.g-bend { width: 155px; padding-left: 3px; }
.g-corner { width: 98px; padding-left: 3px; }
.g-punch { width: 98px; padding-left: 3px; }
.g-feature { width: 171px; padding-left: 7px; }
.g-form { width: 146px; padding-left: 3px; }
.g-flat { width: 59px; }
.tool {
    width: 56px;
    display: flex;
    flex-direction: column;
    align-items: center;
    line-height: 17px;
}
.tool > svg:first-child {
    width: 32px;
    height: 32px;
    margin-bottom: 4px;
}
.tool .caret {
    margin-top: 5px;
}
.frame {
    width: 38px;
    height: 35px;
    margin-bottom: 1px;
    display: grid;
    place-items: center;
    border: 1px solid #c0c0c0;
    border-radius: 3px;
}
.frame svg {
    width: 16px;
    height: 16px;
}
.g-sketch .tool, .g-bend .tool { width: 48px; }
.g-bend .tool.mid { width: 50px; }
.g-basic .tool { width: 46px; }
.g-basic .tool.wide { width: 72px; }
.group-body .tool.more {
    width: 50px;
    margin-left: auto;
    margin-right: -1px;
}
.gallery {
    height: 69px;
    margin-left: 4px;
    display: flex;
    border: 1px solid #b4b4b4;
    background: #e6e6e6;
}
.shape {
    width: 79px;
    display: flex;
    flex-direction: column;
    align-items: center;
    gap: 4px;
    padding-top: 8px;
}
.shape svg {
    width: 32px;
    height: 32px;
}
.scroller {
    width: 17px;
    display: flex;
    flex-direction: column;
}
.scroller button {
    flex: 1;
    display: grid;
    place-items: center;
    border-left: 1px solid #b4b4b4;
    border-bottom: 1px solid #b4b4b4;
    background: linear-gradient(#efefef, #dedede);
}
.scroller button:last-child {
    border-bottom: 0;
}
.scroller button:disabled {
    color: #b4b4b4;
}
.gallery.list {
    flex: 1;
    margin: 0 2px 0 0;
}
.rows {
    flex: 1;
    display: flex;
    flex-direction: column;
}
.rows button {
    flex: 1;
    display: flex;
    align-items: center;
    gap: 4px;
    padding-left: 2px;
}
.group-foot {
    display: flex;
    align-items: center;
    color: #444;
    padding: 2px 9px 0 0;
}
.group-foot span {
    flex: 1;
    padding-right: 8px;
    text-align: center;
}

/* Selection bar */
.selection-bar {
    height: 32px;
    flex: none;
    display: flex;
    align-items: center;
    padding-left: 10px;
    background: linear-gradient(#cacaca, #dedede 30%, #d6d6d6);
}
.menu-button {
    display: flex;
    align-items: center;
}
.menu-button .icon {
    margin-right: 4px;
}
.menu-button .caret {
    margin-left: 4px;
}
.divider {
    width: 2px;
    height: 22px;
    margin: 0 7px 0 11px;
    border-left: 1px solid #b4b4b4;
    border-right: 1px solid #fff;
}
.divider.wide {
    margin-right: 11px;
}
.combo {
    display: flex;
    height: 22px;
    border: 1px solid #555;
    border-radius: 3px;
    overflow: hidden;
    background: #fff;
}
.combo select {
    flex: 1;
    min-width: 0;
    appearance: none;
    border: 0;
    padding: 0 1px;
    background: none;
}
.combo-arrow {
    width: 16px;
    display: grid;
    place-items: center;
    border: 1px solid #2c5ca8;
    background: linear-gradient(#d4ecff, #6cb0f4 50%, #a4dcff);
}
.combo-arrow svg {
    width: 10px;
    height: 6px;
}
.c-type {
    width: 147px;
    margin-right: 11px;
}
.c-scope {
    width: 154px;
    margin-right: 9px;
}
.snap, .view-tools {
    display: flex;
    align-items: center;
    gap: 9px;
}
.snap .caret, .view-tools .caret {
    margin-left: -3px;
}
.snap .near {
    margin-right: -4px;
}

/* Resource rail */
.workspace {
    flex: 1;
    min-height: 0;
    display: flex;
}
.rail {
    width: 31px;
    flex: none;
    display: flex;
    flex-direction: column;
    gap: 3px;
    padding-left: 4px;
    background: linear-gradient(90deg, #a4a4a4, #b4b4b4 80%, #8c8c8c);
}
.rail-letter {
    height: 43px;
    padding: 8px 5px;
}
.rail button {
    height: 39px;
    display: grid;
    place-items: center;
    border: 1px solid #777;
    border-right: 0;
    border-radius: 4px 0 0 4px;
    background: linear-gradient(90deg, #d8d8d8, #bcbcbc);
}
.rail button.current {
    height: 42px;
    margin-top: -2px;
    margin-left: -2px;
    margin-bottom: -1px;
    background: #ebebeb;
}
.rail svg {
    width: 24px;
    height: 24px;
}
.rail .space {
    margin-top: 12px;
}

/* Part navigator */
.navigator {
    width: 492px;
    flex: none;
    display: flex;
    flex-direction: column;
    padding: 0 10px 0 6px;
    border-left: 2px solid #f4f4f4;
    border-top: 1px solid #888;
    border-right: 1px solid #888;
    background: #ebebeb;
}
.navigator-title {
    height: 29px;
    display: flex;
    align-items: center;
    justify-content: space-between;
    padding: 0 4px;
}
.navigator-title h2 {
    font-weight: 700;
}
.restore {
    width: 13px;
    height: 12px;
    border: 1px solid #111;
    border-top-width: 2px;
}
.tree {
    flex: 1;
    border: 1px solid #777;
    border-bottom: 0;
    overflow: hidden;
    background:
        linear-gradient(#e4e4e4, #e4e4e4) 199px 0 / 1px 100% no-repeat,
        linear-gradient(#e4e4e4, #e4e4e4) 299px 0 / 1px 100% no-repeat,
        linear-gradient(#e4e4e4, #e4e4e4) 399px 0 / 1px 100% no-repeat,
        repeating-linear-gradient(#fff 0 19px, #e4e4e4 19px 20px, #f7f7f7 20px 39px, #e4e4e4 39px 40px) 0 22px;
}
.tree table {
    width: 100%;
    table-layout: fixed;
    border-collapse: separate;
    border-spacing: 0;
}
.tree th {
    width: 100px;
    height: 22px;
    padding: 2px 6px 0;
    text-align: left;
    font-weight: 400;
    border-right: 1px solid #999;
    border-bottom: 1px solid #999;
    background: linear-gradient(#f6f6f6, #e8e8e8 50%, #dcdee0);
}
.tree th:first-child {
    width: 200px;
}
.tree th:last-child {
    width: auto;
    border-right: 0;
}
.sort {
    display: inline-block;
    width: 11px;
    height: 6px;
    margin: 0 0 3px 16px;
}
.tree td {
    height: 20px;
    padding: 0;
    overflow: hidden;
}
.tree td > .tick {
    margin-left: 6px;
}
.node {
    height: 20px;
    display: flex;
    align-items: center;
    padding-left: 4px;
    white-space: nowrap;
    color: #333;
    background: repeating-linear-gradient(#999 0 1px, transparent 1px 2px) 8px 0 / 1px 100% no-repeat;
}
.node.last {
    background-size: 1px 50%;
}
.node .icon {
    margin-right: 4px;
}
.node .tick {
    margin: 0 0 0 2px;
}
.expander {
    width: 9px;
    height: 9px;
    border: 1px solid #888;
    border-radius: 1px;
    background: linear-gradient(#111, #111) 1px 3px / 5px 1px no-repeat, #fff;
}
.expander.plus {
    background:
        linear-gradient(#111, #111) 1px 3px / 5px 1px no-repeat,
        linear-gradient(#111, #111) 3px 1px / 1px 5px no-repeat,
        #fff;
}
.dots {
    width: 5px;
    border-top: 1px dotted #999;
}
.node.child {
    padding-left: 29px;
    background-position: 28px 0;
}
.child .dots {
    width: 9px;
    margin-right: 2px;
}
.node.child .icon {
    margin: 0 3px 0 2px;
}
.child input {
    appearance: none;
    width: 12px;
    height: 12px;
    border: 1px solid #000;
    background: #fff url("data:image/svg+xml,%3Csvg xmlns='http://www.w3.org/2000/svg' viewBox='0 0 10 10'%3E%3Cpath d='M1 5l3 3 5-7' fill='none' stroke='%2310b820' stroke-width='2.500'/%3E%3C/svg%3E");
}
.node.muted {
    color: #aaa;
}
.node.current {
    font-weight: 700;
}

/* Graphics window */
.stage {
    flex: 1;
    min-width: 0;
    display: flex;
    flex-direction: column;
}
.doc-tabs {
    height: 23px;
    flex: none;
    display: flex;
    border-bottom: 2px solid #5a5a5a;
    background: #ebebeb;
}
.doc-tab {
    display: flex;
    align-items: center;
    gap: 4px;
    padding: 0 23px 0 6px;
}
.doc-tab span {
    margin-left: 6px;
}
.doc-tab.open {
    padding: 0 7px 0 6px;
    color: #fff;
    background: #5a5a5a;
}
.close {
    width: 8px;
    height: 8px;
    margin-left: 4px;
}
.canvas {
    flex: 1;
    position: relative;
    background: linear-gradient(#b2b3b5, #e9eaec);
}
.model {
    position: absolute;
    left: 327px;
    top: 176px;
    width: 130px;
    height: 215px;
}
.watermark {
    position: absolute;
    right: 5px;
    bottom: 4px;
    font-size: 16px;
    color: #8a8a8a;
    white-space: pre;
}
.watermark span {
    font: 13px "Liberation Mono", monospace;
}

/* Dialogs */
.dialog {
    position: absolute;
    left: 143px;
    top: 365px;
    width: 328px;
    border-bottom: 8px solid #181818;
    border-radius: 6px;
    background: #ebebeb;
}
.dialog-title {
    height: 22px;
    display: flex;
    border: 1px solid #000;
    border-radius: 6px 6px 0 0;
    color: #fff;
    background: linear-gradient(#6a6c70, #45474a 40%, #1c1c1c 45%);
}
.gear {
    width: 14px;
    height: 14px;
    margin: 4px 3px;
}
.dialog-title h2 {
    flex: 1;
    padding: 2px 5px;
    border-left: 1px solid #ccc;
}
.dialog-title button {
    width: 21px;
    display: grid;
    place-items: center;
    border-left: 1px solid #ccc;
}
.dialog-title button svg {
    width: 12px;
    height: 12px;
}
.dialog-body {
    padding: 4px 6px 6px;
    border: 1px solid #888;
    border-width: 0 1px;
}
.sections {
    border-right: 1px solid #999;
    padding-bottom: 2px;
    border-bottom: 1px solid #aaa;
}
.section-head {
    width: 100%;
    height: 23px;
    display: flex;
    align-items: center;
    justify-content: space-between;
    padding-left: 6px;
    color: #000050;
    border-top: 1px solid #fff;
    border-bottom: 1px solid #909090;
    background: linear-gradient(#f8f8f8, #eeeeef 50%, #d8dadc);
}
.section-head span {
    width: 22px;
    height: 21px;
    display: grid;
    place-items: center;
    border-left: 1px solid #aaa;
}
.section-head svg {
    width: 12px;
    height: 10px;
}
.section-body {
    display: flex;
    align-items: center;
    justify-content: space-between;
    padding: 0 8px 3px;
    background: #d2d2d2;
    box-shadow: inset 1px 1px 3px #999;
}
.face {
    height: 47px;
}
.orient {
    height: 40px;
}
.orient .combo {
    width: 140px;
}
.pick {
    flex: 1;
    height: 31px;
    display: flex;
    align-items: center;
    gap: 4px;
    padding-left: 2px;
    border-radius: 5px;
    background: linear-gradient(90deg, #e2a870 30%, #d2d2d2);
}
.face-button {
    width: 31px;
    height: 31px;
    display: grid;
    place-items: center;
    border: 2px solid #777;
    border-radius: 4px;
    background: linear-gradient(#fff, #ddd 45%, #bcbcbc 50%, #eee);
}
.face-button svg {
    width: 24px;
    height: 20px;
}
.settings {
    height: 82px;
    flex-direction: column;
    align-items: flex-start;
    justify-content: center;
    gap: 7px;
}
.check {
    display: flex;
    align-items: center;
    gap: 2px;
}
.check input {
    appearance: none;
    width: 16px;
    height: 16px;
    border: 1px solid #555;
    border-radius: 2px;
    background: linear-gradient(#f8f8f8, #c4c4c4 50%, #f0f0f0);
}
.check input:checked {
    border-color: #1c5088;
    background:
        url("data:image/svg+xml,%3Csvg xmlns='http://www.w3.org/2000/svg' viewBox='0 0 14 14'%3E%3Cpath d='M2 6l4 4 6-7' fill='none' stroke='%23104890' stroke-width='3'/%3E%3C/svg%3E"),
        linear-gradient(#f0f8ff, #80c4f0 50%, #60e0f8);
}
.actions {
    display: flex;
    justify-content: flex-end;
    gap: 7px;
    padding: 6px 10px 0 0;
}
.push {
    width: 52px;
    height: 23px;
    border: 2px solid #777;
    border-radius: 4px;
    background: linear-gradient(#fafafa, #dcdcdc 45%, #c0c0c0 50%, #eee);
}
.push.primary {
    border-color: #3c7c38;
    background: linear-gradient(#d4f0c4, #98d480 45%, #64c044 50%, #b0f490);
}
.push.focused {
    width: 61px;
    height: 24px;
    outline: 1px dotted #111;
    outline-offset: -3px;
}

/* Message box */
.message {
    position: absolute;
    left: 734px;
    top: 453px;
    width: 452px;
    border-radius: 6px 6px 0 0;
    background: #ebebeb;
}
.message h2 {
    height: 24px;
    padding: 5px 8px;
    line-height: 18px;
    color: #fff;
    border: 1px solid #000;
    border-radius: 6px 6px 0 0;
    background: linear-gradient(#6a6c70, #45474a 36%, #1c1c1c 37%);
}
.message-body {
    padding: 12px 7px 7px;
    border: 1px solid #999;
    border-top: 0;
}
.message-main {
    display: flex;
    gap: 14px;
    padding-left: 8px;
}
.message-main p {
    line-height: 17px;
    margin-bottom: 6px;
}
.info {
    width: 31px;
    height: 31px;
}
.message-foot {
    display: flex;
    justify-content: center;
    margin-top: 3px;
    padding: 4px 0;
    background: linear-gradient(#ebebeb, #dadada);
}

/* Red pen strokes over the whole screen */
.markup {
    position: absolute;
    left: 0;
    top: 0;
    width: 100%;
    height: 100%;
    pointer-events: none;
    fill: none;
    stroke: #ff2010;
    stroke-width: 3;
    stroke-linecap: round;
}
```
